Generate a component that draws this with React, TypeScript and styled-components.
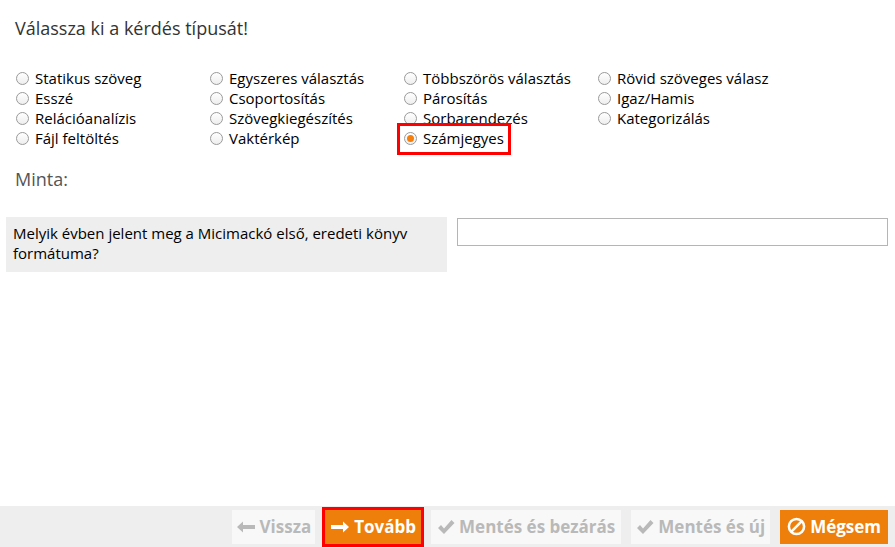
import React from "react";
import styled, { createGlobalStyle } from "styled-components";

const Global = createGlobalStyle`
  html, body { margin: 0; padding: 0; background: #fff; }
  body { font-family: "Open Sans", "Noto Sans", sans-serif; }
  *, *::before, *::after { box-sizing: border-box; }
`;

const Page = styled.div`
  display: flex;
  flex-direction: column;
  height: 547px;
  width: 895px;
`;

const Main = styled.div`
  flex: 1;
  padding: 17px 7px 0 6px;
`;

const Title = styled.h1`
  margin: 0 0 0 9px;
  font-size: 18px;
  line-height: 22px;
  font-weight: 400;
  color: #333;
`;

const Grid = styled.div`
  display: grid;
  grid-template-columns: repeat(4, 194px);
  margin: 29px 0 0 10px;
`;

const Option = styled.label<{ $highlight?: boolean }>`
  display: flex;
  align-items: center;
  gap: 6px;
  height: 20px;
  font-size: 15px;
  color: #000;
  position: relative;
  white-space: nowrap;
  ${(p) =>
    p.$highlight &&
    `
    &::after {
      content: "";
      position: absolute;
      left: -7px;
      top: -5px;
      width: 114px;
      height: 32px;
      border: 3px solid #f00;
    }
  `}
`;

const Radio = styled.span<{ $checked?: boolean }>`
  width: 13px;
  height: 13px;
  border-radius: 50%;
  border: 1px solid #9a9a9a;
  background: linear-gradient(#fff, #eee);
  display: inline-flex;
  align-items: center;
  justify-content: center;
  flex: none;
  &::before {
    content: "";
    width: 7px;
    height: 7px;
    border-radius: 50%;
    background: ${(p) => (p.$checked ? "#f57f0e" : "transparent")};
  }
`;

const Subtitle = styled.h2`
  margin: 20px 0 0 9px;
  font-size: 18px;
  line-height: 22px;
  font-weight: 400;
  color: #555;
`;

const QuestionRow = styled.div`
  display: flex;
  align-items: flex-start;
  gap: 10px;
  margin-top: 27px;
`;

const QuestionBox = styled.div`
  width: 441px;
  background: #eee;
  padding: 6px 7px 9px;
  font-size: 15px;
  line-height: 20px;
  color: #000;
`;

const Input = styled.input`
  margin-top: 1px;
  width: 431px;
  height: 28px;
  border: 1px solid #b5b5b5;
  background: #fff;
  outline: none;
`;

const Footer = styled.div`
  height: 41px;
  background: #eee;
  display: flex;
  justify-content: flex-end;
  align-items: center;
  padding-right: 7px;
`;

const Btn = styled.button<{ $variant: "disabled" | "primary"; $ring?: boolean; $ml: number; $px?: number }>`
  margin-left: ${(p) => p.$ml}px;
  height: 34px;
  padding: 0 ${(p) => p.$px ?? 6}px;
  display: inline-flex;
  align-items: center;
  gap: 4px;
  font-family: "Open Sans", sans-serif;
  font-weight: 700;
  font-size: 17px;
  border: none;
  background: ${(p) => (p.$variant === "primary" ? "#ee7f0b" : "#f8f8f8")};
  color: ${(p) => (p.$variant === "primary" ? "#fff" : "#b9b9b9")};
  outline: ${(p) => (p.$ring ? "3px solid #f00" : "none")};
  cursor: pointer;
`;

const ArrowLeft = () => (
  <svg width="20" height="14" viewBox="0 0 20 14">
    <path d="M1 7 L7 1.5 L7 5 L19 5 L19 9 L7 9 L7 12.5 Z" fill="currentColor" />
  </svg>
);
const ArrowRight = () => (
  <svg width="20" height="14" viewBox="0 0 20 14">
    <path d="M19 7 L13 1.5 L13 5 L1 5 L1 9 L13 9 L13 12.5 Z" fill="currentColor" />
  </svg>
);
const Check = () => (
  <svg width="18" height="16" viewBox="0 0 18 16">
    <path d="M1 9 L4 6 L7 9.5 L14.5 1 L17.5 4 L7 15 Z" fill="currentColor" />
  </svg>
);
const Ban = () => (
  <svg width="19" height="19" viewBox="0 0 18 18">
    <circle cx="9" cy="9" r="7.2" fill="none" stroke="currentColor" strokeWidth="2.4" />
    <line x1="4.2" y1="13.8" x2="13.8" y2="4.2" stroke="currentColor" strokeWidth="2.4" />
  </svg>
);

const options: { label: string; checked?: boolean }[][] = [
  [{ label: "Statikus szöveg" }, { label: "Egyszeres választás" }, { label: "Többszörös választás" }, { label: "Rövid szöveges válasz" }],
  [{ label: "Esszé" }, { label: "Csoportosítás" }, { label: "Párosítás" }, { label: "Igaz/Hamis" }],
  [{ label: "Relációanalízis" }, { label: "Szövegkiegészítés" }, { label: "Sorbarendezés" }, { label: "Kategorizálás" }],
  [{ label: "Fájl feltöltés" }, { label: "Vaktérkép" }, { label: "Számjegyes", checked: true }],
];

export default function App() {
  return (
    <>
      <Global />
      <Page>
        <Main>
          <Title>Válassza ki a kérdés típusát!</Title>
          <Grid>
            {options.flat().map((o) => (
              <Option key={o.label} $highlight={o.checked}>
                <Radio $checked={o.checked} />
                {o.label}
              </Option>
            ))}
          </Grid>
          <Subtitle>Minta:</Subtitle>
          <QuestionRow>
            <QuestionBox>Melyik évben jelent meg a Micimackó első, eredeti könyv formátuma?</QuestionBox>
            <Input type="text" />
          </QuestionRow>
        </Main>
        <Footer>
          <Btn $variant="disabled" $ml={0} $px={4}>
            <ArrowLeft />Vissza
          </Btn>
          <Btn $variant="primary" $ring $ml={10} $px={5}>
            <ArrowRight />Tovább
          </Btn>
          <Btn $variant="disabled" $ml={10}>
            <Check />Mentés és bezárás
          </Btn>
          <Btn $variant="disabled" $ml={10} $px={5}>
            <Check />Mentés és új
          </Btn>
          <Btn $variant="primary" $ml={10} $px={7}>
            <Ban />Mégsem
          </Btn>
        </Footer>
      </Page>
    </>
  );
}
